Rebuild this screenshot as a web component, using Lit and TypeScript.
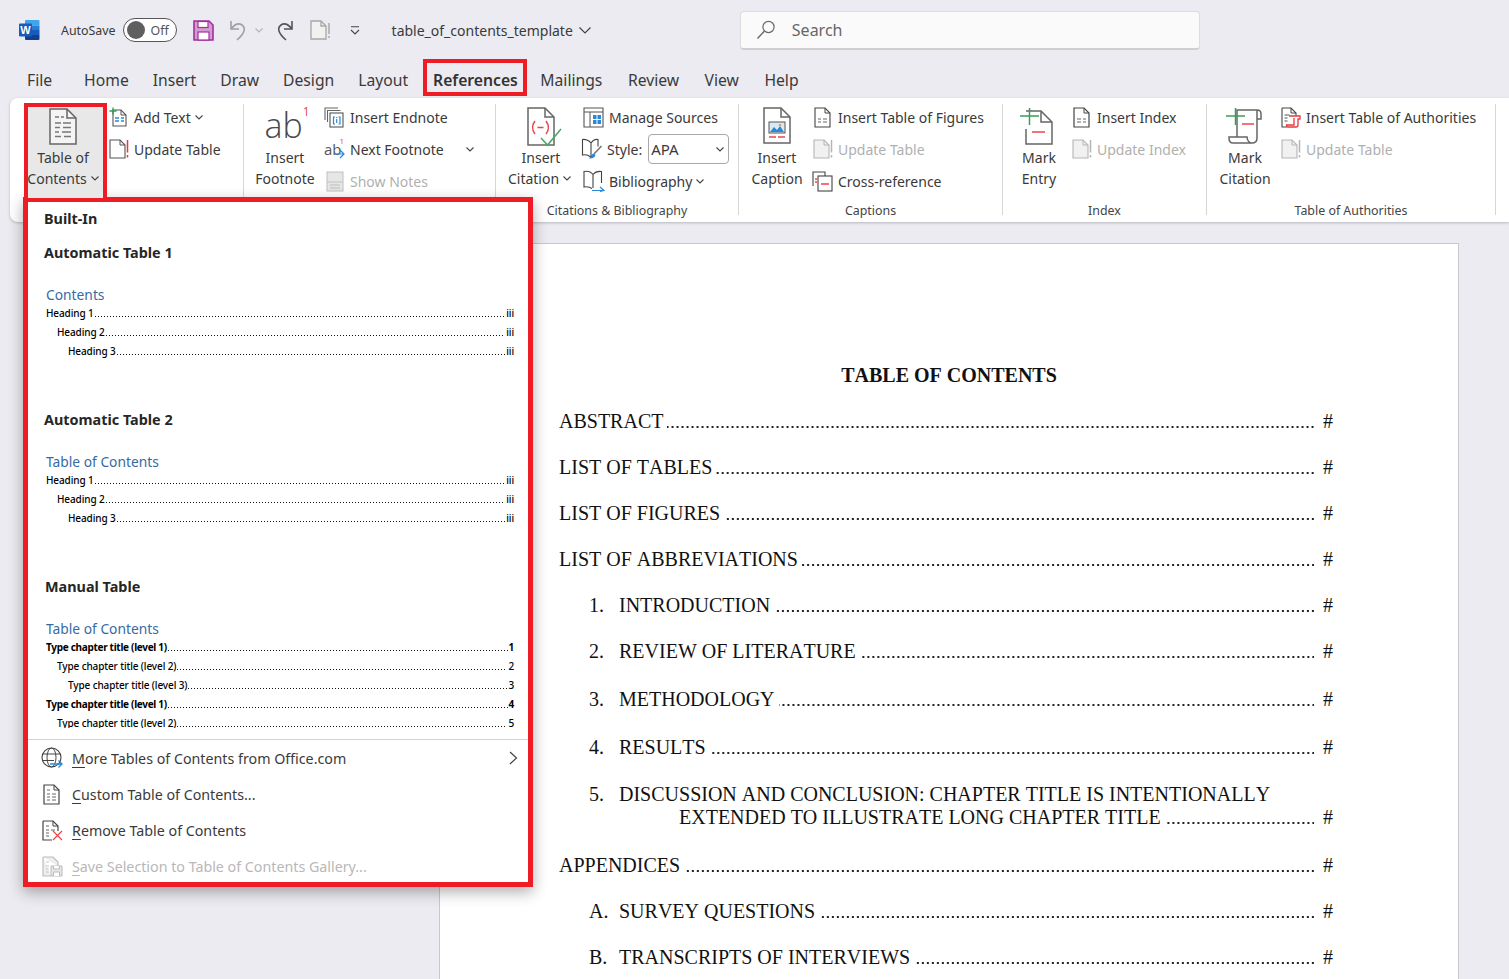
import { LitElement, html, css } from "lit";
import { customElement } from "lit/decorators.js";

const chev = html`<svg class="chev" width="8" height="5" viewBox="0 0 8 5"><path d="M.5.5 4 4 7.5.5" fill="none" stroke="#444" stroke-width="1.1"/></svg>`;
const chevOff = html`<svg class="chev" width="8" height="5" viewBox="0 0 8 5"><path d="M.5.5 4 4 7.5.5" fill="none" stroke="#b5b5b5" stroke-width="1.1"/></svg>`;

const icons = {
  word: html`<svg width="21" height="20" viewBox="0 0 21 20"><path d="M7 0h12.500a1 1 0 0 1 1 1v4.500H6V1a1 1 0 0 1 1-1z" fill="#41a5ee"/><rect x="6" y="5.500" width="14.500" height="4.500" fill="#2b7cd3"/><rect x="6" y="10" width="14.500" height="5" fill="#185abd"/><path d="M6 15h14.500v4a1 1 0 0 1-1 1H7a1 1 0 0 1-1-1z" fill="#103f91"/><rect y="3.500" width="13" height="13" rx="1" fill="#185abd"/><text x="6.500" y="14" text-anchor="middle" font-family="Liberation Sans" font-weight="700" font-size="11" fill="#fff">W</text></svg>`,
  save: html`<svg width="21" height="21" viewBox="0 0 21 21"><path d="M1 1h15l4 4v15H1z" fill="#d39bd1" stroke="#a3309f" stroke-width="1.6"/><rect x="5" y="1.500" width="10" height="6" fill="#fff" stroke="#a3309f" stroke-width="1.2"/><rect x="5" y="12" width="11" height="8" fill="#fff" stroke="#a3309f" stroke-width="1.2"/></svg>`,
  undo: html`<svg width="20" height="22" viewBox="0 0 20 22"><path d="M3 2v8h8M3 10c4-5 8-6 11-4 4 3 3 8-5 15" fill="none" stroke="#a0a0a0" stroke-width="1.6"/></svg>`,
  redo: html`<svg width="20" height="22" viewBox="0 0 20 22"><path d="M17 2v8H9M17 10c-4-5-8-6-11-4-4 3-3 8 5 15" fill="none" stroke="#555" stroke-width="1.6"/></svg>`,
  qdoc: html`<svg width="21" height="20" viewBox="0 0 21 20"><path d="M1 1h10l5 5v13H1z" fill="#f1f1f1" stroke="#a6a6a6" stroke-width="1.3"/><path d="M11 1v5h5" fill="none" stroke="#a6a6a6" stroke-width="1.3"/><path d="M19 3v11M19 16v2" stroke="#a6a6a6" stroke-width="1.4"/></svg>`,
  custom: html`<svg width="10" height="9" viewBox="0 0 10 9"><path d="M1 .7h8M1 4l4 4 4-4" fill="none" stroke="#444" stroke-width="1.1"/></svg>`,
  search: html`<svg width="20" height="20" viewBox="0 0 20 20"><circle cx="12.500" cy="7" r="5.600" fill="none" stroke="#666" stroke-width="1.2"/><path d="M8.500 11 1.500 18.500" stroke="#666" stroke-width="1.3"/></svg>`,
  toc: html`<svg width="30" height="37" viewBox="0 0 30 37"><path d="M2 1h17l9 9v26H2z" fill="#f4f4f4" stroke="#666" stroke-width="1.5"/><path d="M19 1v9h9" fill="none" stroke="#666" stroke-width="1.5"/><path d="M7 9h4M13 9h3M7 15h6M15 15h8M7 19.500h5M15 19.500h8M7 24h4M14 24h9M7 28.500h6M16 28.500h7" stroke="#777" stroke-width="1.3"/></svg>`,
  addText: html`<svg width="20" height="20" viewBox="0 0 20 20"><path d="M4 3h8l5 5v11H4z" fill="#fff" stroke="#555" stroke-width="1.1"/><path d="M12 3v5h5" fill="none" stroke="#555"/><path d="M.500 4h7M4 .500v7" stroke="#2e9e4f" stroke-width="1.3"/><path d="M6 11h4M12 11h3M6 14h4M12 14h3" stroke="#2b88d8" stroke-width="1.3"/></svg>`,
  update: html`<svg width="20" height="20" viewBox="0 0 20 20"><path d="M1 1h10l5 5v13H1z" fill="#fff" stroke="#555" stroke-width="1.1"/><path d="M11 1v5h5" fill="none" stroke="#555"/><path d="M18.500 1v12.500M18.500 16v2.500" stroke="#e8383d" stroke-width="1.500"/></svg>`,
  updateOff: html`<svg width="20" height="20" viewBox="0 0 20 20"><path d="M1 1h10l5 5v13H1z" fill="#f1f1f1" stroke="#b5b5b5" stroke-width="1.1"/><path d="M11 1v5h5" fill="none" stroke="#b5b5b5"/><path d="M18.500 1v12.500M18.500 16v2.500" stroke="#b5b5b5" stroke-width="1.500"/></svg>`,
  endnote: html`<svg width="21" height="21" viewBox="0 0 21 21"><path d="M1 13V1h13M3.500 15V3.500h13" fill="none" stroke="#666" stroke-width="1.1"/><rect x="6" y="6" width="13" height="14" fill="#fff" stroke="#555" stroke-width="1.1"/><path d="M11 10H9.500v7H11M14.500 10H16v7h-1.500M12.700 12v4M12.700 10v1" fill="none" stroke="#2b88d8" stroke-width="1.2"/></svg>`,
  notes: html`<svg width="18" height="21" viewBox="0 0 18 21"><rect x="1" y="1" width="16" height="19" fill="#e6e6e6" stroke="#c0c0c0"/><path d="M1 11h16" stroke="#c0c0c0"/><path d="M4 14h10M4 17h10" stroke="#bcbcbc"/></svg>`,
  citation: html`<svg width="36" height="42" viewBox="0 0 36 42"><path d="M2 1h17l9 9v28H2z" fill="#fff" stroke="#666" stroke-width="1.500"/><path d="M19 1v9h9" fill="none" stroke="#666" stroke-width="1.500"/><path d="M9 14c-3 4-3 9 0 13M20 14c3 4 3 9 0 13M11.500 20.500h6" fill="none" stroke="#e8464b" stroke-width="1.500"/><path d="M15 31l6.500 7L35 22" fill="none" stroke="#4aa564" stroke-width="1.500"/></svg>`,
  sources: html`<svg width="21" height="21" viewBox="0 0 21 21"><path d="M1 1h19v19H1z" fill="#fff" stroke="#555" stroke-width="1.1"/><path d="M1 5h19M7 5v15" stroke="#555"/><rect x="10" y="8" width="8" height="9" fill="#2b88d8"/><path d="M14 8v9M10 12.500h8" stroke="#fff"/></svg>`,
  style: html`<svg width="22" height="22" viewBox="0 0 22 22"><path d="M10 5C8 2 4 1 1.500 1.500V17c3-.5 6 0 8 2 .5-.5 1-1 2-1.500M10 5c2-3 4-4 7-3.500v7M10 5v14" fill="none" stroke="#444" stroke-width="1.1"/><path d="M20.500 8 13 16" stroke="#777" stroke-width="1.600"/><path d="M12.500 15.500c-2 .5-2 3-4.500 5 3.500.5 6-1 6.500-3.500z" fill="#2b88d8"/></svg>`,
  biblio: html`<svg width="22" height="22" viewBox="0 0 22 22"><path d="M10 4.500C8 2 4 1 1 1.500V17c3-.5 6 0 8 1.500M10 4.500C12 2 15 1 18.500 1.500V13M10 4.500V18" fill="none" stroke="#444" stroke-width="1.1"/><path d="M9 20.500h12M17 17l4 3.500-4 1" fill="none" stroke="#2b88d8" stroke-width="1.2"/></svg>`,
  caption: html`<svg width="30" height="37" viewBox="0 0 30 37"><path d="M2 1h17l9 9v26H2z" fill="#fff" stroke="#666" stroke-width="1.500"/><path d="M19 1v9h9" fill="none" stroke="#666" stroke-width="1.500"/><rect x="7" y="15" width="16" height="11" fill="#dbe9f6" stroke="#555"/><path d="M8 25l4-5 3 3 3-4 4 6z" fill="#2b88d8"/><circle cx="18" cy="18" r="1.300" fill="#e8a33d"/><path d="M7 30h7M16 30h7" stroke="#e8464b" stroke-width="1.500"/></svg>`,
  figures: html`<svg width="18" height="21" viewBox="0 0 18 21"><path d="M1 1h10l5 5v14H1z" fill="#fff" stroke="#444" stroke-width="1.1"/><path d="M11 1v5h5" fill="none" stroke="#444"/><path d="M4 12h3M9 12h4M4 15h3M9 15h4" stroke="#666"/></svg>`,
  crossRef: html`<svg width="21" height="21" viewBox="0 0 21 21"><path d="M1 15V1h12v4" fill="#fff" stroke="#444" stroke-width="1.1"/><rect x="6" y="5" width="14" height="15" fill="#fff" stroke="#444" stroke-width="1.1"/><path d="M9 13h8M3 8h2M3 11h2" stroke="#e8464b" stroke-width="1.300"/></svg>`,
  entry: html`<svg width="36" height="38" viewBox="0 0 36 38"><path d="M7 4h15l11 11v22H7V22" fill="#fff" stroke="#666" stroke-width="1.500"/><path d="M22 4v11h11" fill="none" stroke="#666" stroke-width="1.500"/><path d="M1 9h19M10.500 1v17" stroke="#3a9d5a" stroke-width="1.500"/><path d="M13 25h13" stroke="#e8464b" stroke-width="1.500"/></svg>`,
  mark: html`<svg width="38" height="38" viewBox="0 0 38 38"><path d="M12 22V3h20c3 0 4 2 4 4v5h-4V3M32 3v28c0 3-2 5-5 5H8c-3 0-4-2-4-5v-1h18c0 3 2 6 5 6" fill="none" stroke="#666" stroke-width="1.500"/><path d="M12 22v8" stroke="#666" stroke-width="1.500"/><path d="M1 9h19M10.500 1v17" stroke="#3a9d5a" stroke-width="1.500"/><path d="M17 17h12" stroke="#e8464b" stroke-width="1.500"/></svg>`,
  authorities: html`<svg width="20" height="21" viewBox="0 0 20 21"><path d="M1 1h9l5 5v3M1 1v19h5" fill="#fff" stroke="#444" stroke-width="1.1"/><path d="M10 1v5h5" fill="none" stroke="#444"/><path d="M3.500 8h5M3.500 11h3M3.500 14h3" stroke="#555"/><path d="M8 9h11v3h-2v6c0 1.500-1 2-2 2H7c-1 0-1.500-1-1.500-2H13V11" fill="#fff" stroke="#e8383d" stroke-width="1.300"/></svg>`,
  globe: html`<svg width="22" height="22" viewBox="0 0 22 22"><circle cx="10.500" cy="10.500" r="9.500" fill="none" stroke="#444" stroke-width="1.1"/><ellipse cx="10.500" cy="10.500" rx="4.500" ry="9.500" fill="none" stroke="#444"/><path d="M1.500 7h18M1 13.500h12" stroke="#444"/><path d="M9 17h12M17.500 13.500 21 17l-3.500 3.500" fill="none" stroke="#2b88d8" stroke-width="1.300"/></svg>`,
  customToc: html`<svg width="18" height="21" viewBox="0 0 18 21"><path d="M1 1h10l5 5v14H1z" fill="#fff" stroke="#444" stroke-width="1.2"/><path d="M11 1v5h5" fill="none" stroke="#444"/><path d="M4 6h3M4 10h3M9 10h4M4 13h3M9 13h4M4 16h3M9 16h4" stroke="#666"/></svg>`,
  index: html`<svg width="18" height="21" viewBox="0 0 18 21"><path d="M1 1h10l5 5v14H1z" fill="#fff" stroke="#444" stroke-width="1.2"/><path d="M11 1v5h5" fill="none" stroke="#444"/><path d="M4 12h4M10 12h3M4 15h4M10 15h3" stroke="#666"/></svg>`,
  removeToc: html`<svg width="21" height="21" viewBox="0 0 21 21"><path d="M1 1h10l5 5v5M1 1v19h9" fill="none" stroke="#444" stroke-width="1.2"/><path d="M11 1v5h5" fill="none" stroke="#444"/><path d="M4 6h3M4 10h3M9 10h4M4 13h3M4 16h3" stroke="#666"/><path d="M11 11l9 9M20 11l-9 9" stroke="#e8464b" stroke-width="1.2"/></svg>`,
  saveToc: html`<svg width="21" height="21" viewBox="0 0 21 21"><path d="M1 1h10l5 5v4M1 1v19h8" fill="#eee" stroke="#bbb" stroke-width="1.1"/><path d="M4 6h3M4 10h3M4 13h3M4 16h3" stroke="#c4c4c4"/><path d="M9 10h11v10H9z" fill="#e6e6e6" stroke="#bbb"/><path d="M11.500 10v3h6v-3M11.500 20v-4h6v4" fill="#fff" stroke="#bbb"/></svg>`,
  arrow: html`<svg width="9" height="14" viewBox="0 0 9 14"><path d="M1 1l6.500 6L1 13" fill="none" stroke="#444" stroke-width="1.2"/></svg>`,
};

const tabs = ["Home", "Insert", "Draw", "Design", "Layout"];
const tabsAfter = ["Mailings", "Review", "View", "Help"];

const docRows = [
  { t: "ABSTRACT" },
  { t: "LIST OF TABLES" },
  { t: "LIST OF FIGURES" },
  { t: "LIST OF ABBREVIATIONS" },
  { n: "1.", t: "INTRODUCTION" },
  { n: "2.", t: "REVIEW OF LITERATURE" },
  { n: "3.", t: "METHODOLOGY", c: "gap2" },
  { n: "4.", t: "RESULTS", c: "gap2" },
  { n: "5.", t: "DISCUSSION AND CONCLUSION: CHAPTER TITLE IS INTENTIONALLY", more: "EXTENDED TO ILLUSTRATE LONG CHAPTER TITLE", c: "gap1" },
  { t: "APPENDICES", c: "gap2" },
  { n: "A.", t: "SURVEY QUESTIONS" },
  { n: "B.", t: "TRANSCRIPTS OF INTERVIEWS" },
];

@customElement("app-root")
export class AppRoot extends LitElement {
  static styles = css`
    :host {
      display: block;
      position: relative;
      height: 979px;
      overflow: hidden;
      background: #ebebf1;
      color: #3a3a3a;
      font-family: "Noto Sans", "Liberation Sans", sans-serif;
      font-size: 14px;
    }
    svg { display: block; flex: none; }

    .titlebar { height: 60px; display: flex; align-items: center; padding-left: 19px; }
    .autosave { margin-left: 21px; font-size: 12.4px; }
    .toggle {
      margin-left: 7px; width: 54px; height: 24px; box-sizing: border-box;
      border: 1px solid #555; border-radius: 12px; background: #fff;
      display: flex; align-items: center; padding-left: 3px; gap: 6px; font-size: 12.4px; color: #555;
    }
    .knob { width: 18px; height: 18px; border-radius: 50%; background: #5f5f5f; }
    .qa { display: flex; align-items: center; margin-left: 16px; }
    .qa .undo { margin-left: 14px; }
    .qa .chev { margin: 0 0 0 7px; }
    .qa .redo { margin-left: 12px; }
    .qa .qdoc { margin-left: 15px; }
    .qa .custom { margin-left: 19px; }
    .filename { margin-left: 32px; font-size: 14px; display: flex; align-items: center; gap: 6px; }
    .search {
      margin-left: 149px; width: 460px; height: 39px; box-sizing: border-box;
      background: #fafafa; border: 1px solid #dcdcdc; border-bottom: 2px solid #cfcfcf; border-radius: 4px;
      display: flex; align-items: center; padding-left: 15px; gap: 16px; color: #666; font-size: 16px;
    }

    .tabs { height: 38px; display: flex; align-items: center; padding: 2px 0 0 27px; gap: 24px; font-size: 15.7px; box-sizing: border-box; }
    .tabs .file { margin-right: 8px; }
    .tabs .active { font-weight: 600; color: #333; position: relative; margin: 0 -3px 0 1px; }
    .tabs .after { margin-left: 1.5px; }
    .tabs .active::after {
      content: ""; position: absolute; inset: -10px -9px -5px -10px;
      border: 4px solid #ee1c25;
    }

    .ribbon {
      margin-left: 10px; height: 124px; box-sizing: border-box; background: #fff;
      border-radius: 8px 0 0 8px; box-shadow: 0 1px 3px rgba(0, 0, 0, 0.22);
      display: flex; padding-top: 6px;
    }
    .group { height: 111px; box-sizing: border-box; border-right: 1px solid #d6d6d6; display: flex; flex-direction: column; flex: none; }
    .g1 { width: 234px; }
    .g2 { width: 252px; }
    .g3 { width: 243px; }
    .g4 { width: 264px; }
    .g5 { width: 204px; }
    .g6 { width: 289px; }
    .body { height: 90px; display: flex; padding-left: 7px; }
    .g1 .body { padding-left: 14px; }
    .g4 .body { padding-left: 8px; }
    .g5 .body { padding-left: 14px; }
    .g6 .body { padding-left: 9px; }
    .label { height: 21px; line-height: 34px; text-align: center; font-size: 12.4px; color: #444; white-space: nowrap; }
    .large { display: flex; flex-direction: column; align-items: center; flex: none; line-height: 21px; font-size: 14px; text-align: center; white-space: nowrap; }
    .large .ic { height: 42px; padding-top: 3px; box-sizing: border-box; margin-bottom: 1px; }
    .large .line { display: flex; align-items: center; }
    .tocbtn {
      width: 83px; height: 95px; margin-top: -1px; box-sizing: border-box;
      border: 4px solid #ee1c25; border-bottom: 0; background: #e8e8e8; padding-right: 5px; overflow: hidden; position: relative; z-index: 3;
    }
    .tocbtn .ic { padding-top: 1px; height: 40px; margin-bottom: 0; }
    .w-foot { width: 68px; }
    .w-cit { width: 76px; }
    .w-cit .ic { margin-left: 6px; }
    .w-cit .line { margin-left: -3px; }
    .w-cap { width: 60px; }
    .w-entry { width: 44px; }
    .w-entry .ic { margin-left: -4px; }
    .w-mark { width: 58px; }
    .w-mark .ic { margin-left: -3px; }
    .col { display: flex; flex-direction: column; gap: 6px; flex: none; }
    .g1 .col { margin-left: 1px; }
    .g2 .col { margin-left: 5px; }
    .g3 .col { margin-left: 4px; }
    .g4 .col { margin-left: 5px; }
    .g5 .col { margin-left: 10px; }
    .g6 .col { margin-left: 6px; }
    .small { height: 26px; display: flex; align-items: center; gap: 5px; white-space: nowrap; }
    .small .box { width: 21px; display: flex; justify-content: center; }
    .small .chev { margin-left: -1px; }
    .off { color: #b0b0b0; }
    .spread { width: 150px; }
    .spread .chev { margin-left: auto; }
    .chev { margin-left: 4px; }
    .stylerow { margin-left: -2px; }
    .select {
      margin-left: 1px; width: 81px; height: 30px; box-sizing: border-box; margin-top: -2px; margin-bottom: -2px;
      border: 1px solid #a8a8a8; border-radius: 4px; display: flex; align-items: center; justify-content: space-between; padding: 0 4px 0 2px; font-size: 15px;
    }
    .select .chev { margin-left: 0; }
    .ab { font-family: "Open Sans", sans-serif; font-weight: 300; font-size: 34px; line-height: 36px; display: flex; color: #4a4a4a; margin-left: 4px; }
    .ab sup { font-size: 12px; line-height: 14px; color: #e8464b; margin: -2px 0 0 0; vertical-align: top; font-weight: 400; }
    .absm { position: relative; font-family: "Open Sans", sans-serif; font-weight: 400; font-size: 15px; line-height: 20px; width: 21px; height: 20px; display: block; color: #555; }
    .absm b { position: absolute; top: -3px; right: 1px; font-size: 8px; font-weight: 400; color: #e8464b; line-height: 10px; }
    .absm svg { position: absolute; right: 0; bottom: 0; }

    main { padding: 21px 0 0 439px; }
    .page {
      width: 1020px; box-sizing: border-box; background: #fff; border: 1px solid #c9c9cd; border-bottom: 0;
      padding: 119px 125px 40px 119px; font-family: "Liberation Serif", serif; font-size: 20px; line-height: 23px; color: #111; font-kerning: none;
    }
    .page h1 { margin: 0 0 0 6px; font-size: 20px; font-weight: 700; line-height: 24px; text-align: center; }
    .row { display: flex; margin-top: 23px; white-space: nowrap; }
    .row.gap1 { margin-top: 24px; }
    .row.gap2 { margin-top: 25px; }
    .row.num { padding-left: 30px; }
    .row .n { width: 30px; flex: none; }
    .row.wrap { margin-top: 0; padding-left: 120px; }
    .dots { flex: 1; height: 2px; align-self: flex-end; margin: 0 9px 5px 4px; background: linear-gradient(90deg, transparent 60%, #222 60%) repeat-x right bottom / 5px 2px; }

    .drop {
      position: absolute; left: 23px; top: 197px; width: 510px; height: 690px; box-sizing: border-box;
      border: 5px solid #ee1c25; background: #fff; box-shadow: 0 5px 14px rgba(0, 0, 0, 0.32); z-index: 2;
      display: flex; flex-direction: column; overflow: hidden;
    }
    .gallery { height: 526px; overflow: hidden; padding: 7px 14px 0 16px; box-sizing: border-box; flex: none; }
    .cap { font-weight: 700; font-size: 14.4px; line-height: 20px; color: #262626; }
    .builtin { margin-bottom: 14px; }
    .section { height: 167px; }
    .manual { padding-left: 1px; }
    .prev { padding: 22px 0 0 2px; }
    .prev h2 { margin: 0 0 -1px; font-weight: 400; font-size: 13.8px; line-height: 20px; color: #376ba3; }
    .toc-row { display: flex; height: 19px; line-height: 18px; font-size: 10px; font-weight: 500; color: #000; letter-spacing: -0.12px; white-space: nowrap; }
    .toc-row.bold { font-weight: 700; letter-spacing: -0.3px; }
    .lv2 { padding-left: 11px; }
    .lv3 { padding-left: 22px; }
    .toc-row i { flex: 1; height: 1px; align-self: flex-end; margin: 0 1px 6px 1px; background: linear-gradient(90deg, #111 50%, transparent 50%) repeat-x left bottom / 3px 1px; }
    .sep { height: 1px; background: #d2d2d2; margin-top: 11px; flex: none; }
    .item { height: 36px; flex: none; display: flex; align-items: center; padding-left: 13px; font-size: 14.25px; color: #3a3a3a; white-space: nowrap; }
    .item .box { width: 22px; margin-right: 9px; display: flex; justify-content: center; }
    .item u { text-underline-offset: 3px; }
    .item .more { margin-left: auto; margin-right: 10px; }
    .item.dis { color: #b8b8b8; }
  `;

  small(icon: unknown, text: string, off = false, caret = false) {
    return html`<div class="small ${off ? "off" : ""}"><span class="box">${icon}</span><span>${text}</span>${caret ? chev : ""}</div>`;
  }

  tocRow(text: string, level: number, num: string, bold = false) {
    return html`<div class="toc-row lv${level} ${bold ? "bold" : ""}"><span>${text}</span><i></i><span>${num}</span></div>`;
  }

  autoTable(title: string, heading: string) {
    return html`<div class="section">
      <div class="cap">${title}</div>
      <div class="prev">
        <h2>${heading}</h2>
        ${this.tocRow("Heading 1", 1, "iii")} ${this.tocRow("Heading 2", 2, "iii")} ${this.tocRow("Heading 3", 3, "iii")}
      </div>
    </div>`;
  }

  render() {
    return html`
      <div class="titlebar">
        ${icons.word}
        <span class="autosave">AutoSave</span>
        <div class="toggle"><span class="knob"></span>Off</div>
        <div class="qa">
          ${icons.save}
          <span class="undo">${icons.undo}</span>${chevOff}
          <span class="redo">${icons.redo}</span>
          <span class="qdoc">${icons.qdoc}</span>
          <span class="custom">${icons.custom}</span>
        </div>
        <div class="filename">table_of_contents_template <svg width="12" height="7" viewBox="0 0 12 7"><path d="M.5.5 6 6 11.500.5" fill="none" stroke="#444" stroke-width="1.200"/></svg></div>
        <div class="search">${icons.search}<span>Search</span></div>
      </div>

      <nav class="tabs">
        <span class="file">File</span>
        ${tabs.map((t) => html`<span>${t}</span>`)}
        <span class="active">References</span>
        ${tabsAfter.map((t) => html`<span class="after">${t}</span>`)}
      </nav>

      <div class="ribbon">
        <section class="group g1">
          <div class="body">
            <div class="large tocbtn">
              <div class="ic">${icons.toc}</div>
              <div>Table of</div>
              <div class="line">Contents${chev}</div>
            </div>
            <div class="col">
              ${this.small(icons.addText, "Add Text", false, true)}
              ${this.small(icons.update, "Update Table")}
            </div>
          </div>
        </section>

        <section class="group g2">
          <div class="body">
            <div class="large w-foot">
              <div class="ic"><span class="ab">ab<sup>1</sup></span></div>
              <div>Insert</div>
              <div>Footnote</div>
            </div>
            <div class="col">
              ${this.small(icons.endnote, "Insert Endnote")}
              <div class="small spread">
                <span class="box"><span class="absm">ab<b>1</b><svg width="11" height="10" viewBox="0 0 11 10"><path d="M0 5h10M6 1l4 4-4 4" fill="none" stroke="#2b88d8" stroke-width="1.200"/></svg></span></span>
                <span>Next Footnote</span>${chev}
              </div>
              ${this.small(icons.notes, "Show Notes", true)}
            </div>
          </div>
        </section>

        <section class="group g3">
          <div class="body">
            <div class="large w-cit">
              <div class="ic">${icons.citation}</div>
              <div>Insert</div>
              <div class="line">Citation${chev}</div>
            </div>
            <div class="col">
              ${this.small(icons.sources, "Manage Sources")}
              <div class="small stylerow">
                <span class="box">${icons.style}</span><span>Style:</span>
                <div class="select"><span>APA</span>${chev}</div>
              </div>
              ${this.small(icons.biblio, "Bibliography", false, true)}
            </div>
          </div>
          <div class="label">Citations &amp; Bibliography</div>
        </section>

        <section class="group g4">
          <div class="body">
            <div class="large w-cap">
              <div class="ic">${icons.caption}</div>
              <div>Insert</div>
              <div>Caption</div>
            </div>
            <div class="col">
              ${this.small(icons.figures, "Insert Table of Figures")}
              ${this.small(icons.updateOff, "Update Table", true)}
              ${this.small(icons.crossRef, "Cross-reference")}
            </div>
          </div>
          <div class="label">Captions</div>
        </section>

        <section class="group g5">
          <div class="body">
            <div class="large w-entry">
              <div class="ic">${icons.entry}</div>
              <div>Mark</div>
              <div>Entry</div>
            </div>
            <div class="col">
              ${this.small(icons.index, "Insert Index")}
              ${this.small(icons.updateOff, "Update Index", true)}
            </div>
          </div>
          <div class="label">Index</div>
        </section>

        <section class="group g6">
          <div class="body">
            <div class="large w-mark">
              <div class="ic">${icons.mark}</div>
              <div>Mark</div>
              <div>Citation</div>
            </div>
            <div class="col">
              ${this.small(icons.authorities, "Insert Table of Authorities")}
              ${this.small(icons.updateOff, "Update Table", true)}
            </div>
          </div>
          <div class="label">Table of Authorities</div>
        </section>
      </div>

      <main>
        <article class="page">
          <h1>TABLE OF CONTENTS</h1>
          ${docRows.map(
            (r) => html`
              ${r.more
                ? html`<div class="row num ${r.c ?? ""}"><span class="n">${r.n}</span><span>${r.t}</span></div>
                    <div class="row wrap"><span>${r.more}</span><i class="dots"></i><span>#</span></div>`
                : html`<div class="row ${r.n ? "num" : ""} ${r.c ?? ""}">
                    ${r.n ? html`<span class="n">${r.n}</span>` : ""}<span>${r.t}</span><i class="dots"></i><span>#</span>
                  </div>`}
            `
          )}
        </article>
      </main>

      <div class="drop">
        <div class="gallery">
          <div class="cap builtin">Built-In</div>
          ${this.autoTable("Automatic Table 1", "Contents")}
          ${this.autoTable("Automatic Table 2", "Table of Contents")}
          <div class="section">
            <div class="cap manual">Manual Table</div>
            <div class="prev">
              <h2>Table of Contents</h2>
              ${this.tocRow("Type chapter title (level 1)", 1, "1", true)}
              ${this.tocRow("Type chapter title (level 2)", 2, "2")}
              ${this.tocRow("Type chapter title (level 3)", 3, "3")}
              ${this.tocRow("Type chapter title (level 1)", 1, "4", true)}
              ${this.tocRow("Type chapter title (level 2)", 2, "5")}
            </div>
          </div>
        </div>
        <div class="sep"></div>
        <div class="item"><span class="box">${icons.globe}</span><span><u>M</u>ore Tables of Contents from Office.com</span><span class="more">${icons.arrow}</span></div>
        <div class="item"><span class="box">${icons.customToc}</span><span><u>C</u>ustom Table of Contents...</span></div>
        <div class="item"><span class="box">${icons.removeToc}</span><span><u>R</u>emove Table of Contents</span></div>
        <div class="item dis"><span class="box">${icons.saveToc}</span><span><u>S</u>ave Selection to Table of Contents Gallery...</span></div>
      </div>
    `;
  }
}
